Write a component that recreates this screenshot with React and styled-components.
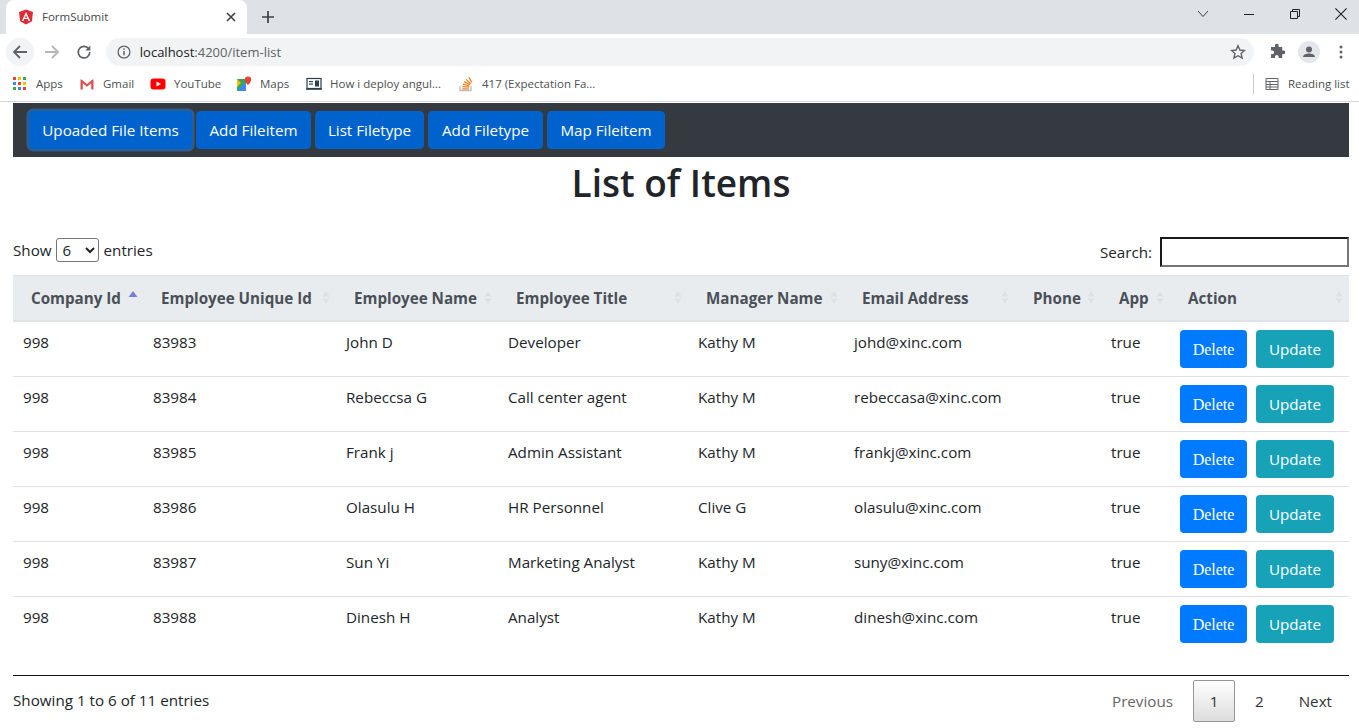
import React from 'react';
import styled, { createGlobalStyle } from 'styled-components';

const Global = createGlobalStyle`
  html, body { margin: 0; padding: 0; background: #fff; overflow: hidden; }
  body { font-family: "Open Sans", "Liberation Sans", sans-serif; color: #212529; }
`;

const Shell = styled.div`
  width: 1359px;
  height: 728px;
  overflow: hidden;
`;

/* browser chrome */
const TabStrip = styled.div`
  height: 34px;
  background: #dee1e6;
  display: flex;
  align-items: stretch;
  padding-left: 6px;
`;
const Tab = styled.div`
  width: 241px;
  background: #fff;
  border-radius: 8px 8px 0 0;
  display: flex;
  align-items: center;
  padding: 0 11px 0 12px;
  box-sizing: border-box;
`;
const TabTitle = styled.span`
  flex: 1;
  margin-left: 8px;
  margin-bottom: 2px;
  font-size: 11.5px;
  color: #45474a;
`;
const NewTab = styled.div`
  width: 42px;
  display: flex;
  align-items: center;
  justify-content: center;
`;
const WindowButtons = styled.div`
  margin-left: auto;
  display: flex;
  align-items: flex-start;
  padding: 7px 11px 0 0;
  gap: 32px;
`;
const Toolbar = styled.div`
  height: 36px;
  display: flex;
  align-items: center;
  padding-left: 6px;
  background: #fff;
`;
const RoundBtn = styled.div`
  width: 28px;
  height: 28px;
  margin-right: 4px;
  border-radius: 50%;
  display: flex;
  align-items: center;
  justify-content: center;
  background: ${(p) => (p.$active ? '#f1f3f4' : 'transparent')};
`;
const Omnibox = styled.div`
  width: 1151px;
  height: 28px;
  margin-left: 4px;
  margin-right: 9px;
  padding: 0 8px 0 11px;
  box-sizing: border-box;
  border-radius: 14px;
  background: #f1f3f4;
  display: flex;
  align-items: center;
`;
const Url = styled.span`
  flex: 1;
  margin-left: 9px;
  font-size: 13px;
  color: #5f6368;
  b { font-weight: 400; color: #202124; }
`;
const ToolIcons = styled.div`
  display: flex;
  align-items: center;
`;
const Bookmarks = styled.div`
  height: 32px;
  box-sizing: border-box;
  border-bottom: 1px solid #d5d7db;
  display: flex;
  align-items: center;
  padding: 0 0 4px 12px;
`;
const Bookmark = styled.div`
  width: ${(p) => p.$w}px;
  display: flex;
  align-items: center;
  gap: 8px;
  font-size: 11.5px;
  color: #4d4f52;
  white-space: nowrap;
`;
const ReadingList = styled.div`
  margin-left: auto;
  height: 20px;
  border-left: 1px solid #c9ccd0;
  padding-left: 11px;
  width: 106px;
  box-sizing: border-box;
  display: flex;
  align-items: center;
  gap: 9px;
  font-size: 11.5px;
  color: #4d4f52;
  white-space: nowrap;
`;

/* page */
const Page = styled.div`
  margin: 1px 10px 0 13px;
`;
const Nav = styled.nav`
  height: 54px;
  background: #343a40;
  display: flex;
  align-items: center;
  padding-left: 16px;
  gap: 4px;
`;
const NavButton = styled.button`
  height: 38px;
  padding: 0;
  width: ${(p) => p.$w}px;
  border: 1px solid #0062cc;
  border-radius: 4px;
  background: #0062cc;
  color: #fff;
  font-family: inherit;
  font-size: 15.2px;
  box-shadow: ${(p) => (p.$focus ? '0 0 0 2.5px rgba(38,143,255,.42)' : 'none')};
`;
const Title = styled.h1`
  margin: 0;
  height: 79px;
  padding-top: 2px;
  box-sizing: border-box;
  text-align: center;
  font-size: 37px;
  line-height: 47px;
  font-weight: 600;
  color: #212529;
`;
const Controls = styled.div`
  height: 39px;
  display: flex;
  align-items: flex-start;
  justify-content: space-between;
  font-size: 15.2px;
`;
const Length = styled.label`
  display: flex;
  align-items: center;
  gap: 4px;
  height: 28px;
`;
const SizeSelect = styled.select`
  width: 43px;
  height: 24px;
  margin-right: 1px;
  font-family: inherit;
  font-size: 15px;
  padding: 0 0 0 2px;
  background: #fff;
  color: #212529;
  border: 1px solid #767676;
  border-radius: 3px;
`;
const SearchBox = styled.label`
  display: flex;
  align-items: center;
  gap: 8px;
  margin-top: 1px;
`;
const SearchInput = styled.input`
  width: 189px;
  height: 30px;
  box-sizing: border-box;
  border: 2px solid;
  border-color: #1a1a1a #767676 #767676 #1a1a1a;
  padding: 0 4px;
  outline: none;
`;
const Table = styled.table`
  width: 1336px;
  table-layout: fixed;
  border-collapse: collapse;
  font-size: 15.2px;
`;
const Head = styled.th`
  width: ${(p) => p.$w}px;
  height: 45px;
  padding: 0 5px 0 18px;
  box-sizing: border-box;
  background: #e9ecef;
  border-top: 1px solid #dee2e6;
  border-bottom: 2px solid #dee2e6;
  color: #495057;
  font-weight: 700;
  text-align: left;
`;
const HeadInner = styled.div`
  display: flex;
  align-items: center;
  justify-content: space-between;
  white-space: nowrap;
`;
const Row = styled.tr`
  height: 55px;
  border-bottom: 1px solid #dee2e6;
  &:first-child { height: 56px; }
  &:last-child { border-bottom: none; }
`;
const Cell = styled.td`
  padding: 8px 10px 0;
  vertical-align: top;
  line-height: 24px;
  color: #212529;
  white-space: nowrap;
`;
const Actions = styled.div`
  display: flex;
  gap: 9px;
`;
const ActionButton = styled.button`
  width: ${(p) => p.$w}px;
  height: 38px;
  padding: ${(p) => p.$pad};
  border: none;
  border-radius: 4px;
  color: #fff;
  background: ${(p) => p.$bg};
  font-family: ${(p) => p.$font};
  font-size: ${(p) => p.$size}px;
`;
const Footer = styled.div`
  margin-top: 23px;
  border-top: 1px solid #111;
  display: flex;
  align-items: flex-start;
  justify-content: space-between;
  font-size: 15.2px;
`;
const Info = styled.div`
  margin-top: 14px;
`;
const Pager = styled.div`
  display: flex;
  align-items: center;
  margin-top: 4px;
  margin-right: 17px;
`;
const PageLink = styled.span`
  color: ${(p) => (p.$off ? '#666' : '#333')};
  margin-left: ${(p) => p.$ml || 0}px;
`;
const CurrentPage = styled.span`
  width: 42px;
  height: 42px;
  box-sizing: border-box;
  margin-left: 20px;
  display: flex;
  align-items: center;
  justify-content: center;
  border: 1px solid #979797;
  border-radius: 2px;
  color: #333;
  background: linear-gradient(to bottom, #fff 0%, #dcdcdc 100%);
`;

const AngularIcon = () => (
  <svg width="16" height="16" viewBox="0 0 16 16">
    <path d="M8 0.5 1 3l1.1 9.2L8 15.5l5.9-3.3L15 3z" fill="#dd2c35" />
    <path d="M8 3 3.8 12h1.6l.8-2h3.6l.8 2h1.6zM8 6.2 9.2 8.7H6.8z" fill="#fff" />
  </svg>
);
const CloseIcon = ({ size = 10, color = '#3c4043', w = 1.6 }) => (
  <svg width={size} height={size} viewBox="0 0 10 10">
    <path d="M1 1l8 8M9 1l-8 8" stroke={color} strokeWidth={w} fill="none" />
  </svg>
);
const PlusIcon = () => (
  <svg width="12" height="12" viewBox="0 0 12 12">
    <path d="M6 0v12M0 6h12" stroke="#3c4043" strokeWidth="1.7" />
  </svg>
);
const ChevronIcon = () => (
  <svg width="14" height="14" viewBox="0 0 14 14">
    <path d="M2 4l5 5.5L12 4" stroke="#3c4043" strokeWidth="1" fill="none" />
  </svg>
);
const MinIcon = () => (
  <svg width="14" height="14" viewBox="0 0 14 14">
    <path d="M2 7.5h10" stroke="#222" strokeWidth="1" />
  </svg>
);
const RestoreIcon = () => (
  <svg width="14" height="14" viewBox="0 0 14 14">
    <path d="M2.5 4.5h7v7h-7zM4.5 4.5v-2h7v7h-2" stroke="#222" strokeWidth="1" fill="none" />
  </svg>
);
const BackIcon = ({ color }) => (
  <svg width="16" height="16" viewBox="0 0 16 16">
    <path d="M15 8H2M8 2 2 8l6 6" stroke={color} strokeWidth="1.8" fill="none" />
  </svg>
);
const ForwardIcon = ({ color }) => (
  <svg width="16" height="16" viewBox="0 0 16 16">
    <path d="M1 8h13M8 2l6 6-6 6" stroke={color} strokeWidth="1.8" fill="none" />
  </svg>
);
const ReloadIcon = () => (
  <svg width="16" height="16" viewBox="0 0 16 16">
    <path d="M13 5.2A5.8 5.8 0 1 0 13.8 8" stroke="#5f6368" strokeWidth="1.7" fill="none" />
    <path d="M14.3 1.5v5h-5z" fill="#5f6368" />
  </svg>
);
const InfoIcon = () => (
  <svg width="14" height="14" viewBox="0 0 14 14">
    <circle cx="7" cy="7" r="5.9" stroke="#5f6368" strokeWidth="1.3" fill="none" />
    <path d="M7 6v4.2" stroke="#5f6368" strokeWidth="1.5" />
    <circle cx="7" cy="4.1" r=".9" fill="#5f6368" />
  </svg>
);
const StarIcon = () => (
  <svg width="16" height="16" viewBox="0 0 16 16">
    <path d="M8 1.8l1.9 4.2 4.6.5-3.4 3.1 1 4.5L8 11.7l-4.1 2.4 1-4.5L1.5 6.5 6.1 6z" stroke="#5f6368" strokeWidth="1.4" fill="none" />
  </svg>
);
const PuzzleIcon = () => (
  <svg width="16" height="16" viewBox="0 0 16 16">
    <path d="M6 1.5a1.8 1.8 0 0 1 3.6 0V3h3.6v3.4h1.2a1.9 1.9 0 0 1 0 3.8h-1.2V14H9.6v-1.3a1.8 1.8 0 0 0-3.6 0V14H2v-3.8h1.2a1.9 1.9 0 0 0 0-3.8H2V3h4z" fill="#5f6368" />
  </svg>
);
const AvatarIcon = () => (
  <svg width="22" height="22" viewBox="0 0 22 22">
    <circle cx="11" cy="11" r="11" fill="#e4e6eb" />
    <circle cx="11" cy="8.5" r="3" fill="#5f6368" />
    <path d="M5 16c0-2.5 3.5-3.6 6-3.6s6 1.1 6 3.6z" fill="#5f6368" />
  </svg>
);
const DotsIcon = () => (
  <svg width="4" height="14" viewBox="0 0 4 14">
    <circle cx="2" cy="2" r="1.5" fill="#5f6368" />
    <circle cx="2" cy="7" r="1.5" fill="#5f6368" />
    <circle cx="2" cy="12" r="1.5" fill="#5f6368" />
  </svg>
);
const AppsIcon = () => {
  const colors = ['#ea4335', '#fbbc05', '#34a853', '#4285f4', '#ea4335', '#fbbc05', '#34a853', '#4285f4', '#ea4335'];
  return (
    <svg width="16" height="16" viewBox="0 0 16 16">
      {colors.map((c, i) => (
        <rect key={i} x={1 + (i % 3) * 5} y={1 + Math.floor(i / 3) * 5} width="3" height="3" fill={c} />
      ))}
    </svg>
  );
};
const GmailIcon = () => (
  <svg width="16" height="16" viewBox="0 0 16 16">
    <path d="M1.5 13.5v-10h1L8 8l5.5-4.5h1v10h-2.3V7.3L8 10.7 3.8 7.3v6.2z" fill="#d9534f" />
  </svg>
);
const YoutubeIcon = () => (
  <svg width="16" height="16" viewBox="0 0 16 16">
    <rect x="0.5" y="2.5" width="15" height="11" rx="3" fill="#f00" />
    <path d="M6.5 5.5v5L11 8z" fill="#fff" />
  </svg>
);
const MapsIcon = () => (
  <svg width="16" height="16" viewBox="0 0 16 16">
    <path d="M1 3h9v12H1z" fill="#34a853" />
    <path d="M1 15 10 6v9z" fill="#4285f4" />
    <path d="M1 3l4 4-4 4z" fill="#fbbc05" />
    <path d="M12 0.5A3.2 3.2 0 0 0 8.8 3.7C8.8 6 12 9 12 9s3.2-3 3.2-5.3A3.2 3.2 0 0 0 12 .5z" fill="#ea4335" />
  </svg>
);
const BoardIcon = () => (
  <svg width="16" height="16" viewBox="0 0 16 16">
    <rect x="1" y="2.5" width="14" height="10" fill="#fff" stroke="#2c3e50" strokeWidth="1.2" />
    <rect x="3" y="5" width="4" height="1.2" fill="#2c3e50" />
    <rect x="3" y="7.5" width="4" height="1.2" fill="#2c3e50" />
    <rect x="9" y="4.5" width="4" height="6" fill="#2c3e50" />
    <rect x="0" y="12.5" width="16" height="1.3" fill="#2c3e50" />
  </svg>
);
const StackIcon = () => (
  <svg width="16" height="16" viewBox="0 0 16 16">
    <path d="M2 10v4.5h11V10" stroke="#bcbbbb" strokeWidth="1.3" fill="none" />
    <path d="M4.2 12.8h6.6M4.4 10.6l6.5.6M5 8.2l6.3 1.7M6.2 5.7l5.7 3M8.2 3.4l4.6 4.3M10.8 1.2l3 5.2" stroke="#f48024" strokeWidth="1.3" fill="none" />
  </svg>
);
const ListIcon = () => (
  <svg width="14" height="14" viewBox="0 0 14 14">
    <path d="M1 1.5h12v11H1zM1 4.5h12M1 7.5h12M1 10h12M5 4.5v8" stroke="#5f6368" strokeWidth="1" fill="none" />
  </svg>
);
const SortIcon = ({ asc }) => (
  <svg width="10" height="15" viewBox="0 0 10 15">
    {asc ? (
      <path d="M5 1 9.5 7h-9z" fill="#7b7bdc" />
    ) : (
      <>
        <path d="M5 1 8.5 6.5h-7z" fill="#dde0e4" />
        <path d="M5 14 8.5 8.5h-7z" fill="#dde0e4" />
      </>
    )}
  </svg>
);

const bookmarks = [
  { label: 'Apps', icon: <AppsIcon />, w: 67 },
  { label: 'Gmail', icon: <GmailIcon />, w: 71 },
  { label: 'YouTube', icon: <YoutubeIcon />, w: 86 },
  { label: 'Maps', icon: <MapsIcon />, w: 70 },
  { label: 'How i deploy angul...', icon: <BoardIcon />, w: 152 },
  { label: '417 (Expectation Fa...', icon: <StackIcon />, w: 160 },
];

const navItems = [
  { label: 'Upoaded File Items', w: 163, focus: true },
  { label: 'Add Fileitem', w: 115 },
  { label: 'List Filetype', w: 109 },
  { label: 'Add Filetype', w: 115 },
  { label: 'Map Fileitem', w: 118 },
];

const columns = [
  { label: 'Company Id', w: 130, asc: true },
  { label: 'Employee Unique Id', w: 193 },
  { label: 'Employee Name', w: 162 },
  { label: 'Employee Title', w: 190 },
  { label: 'Manager Name', w: 156 },
  { label: 'Email Address', w: 171 },
  { label: 'Phone', w: 86 },
  { label: 'App', w: 69 },
  { label: 'Action', w: 179 },
];

const rows = [
  ['83983', 'John D', 'Developer', 'Kathy M', 'johd@xinc.com'],
  ['83984', 'Rebeccsa G', 'Call center agent', 'Kathy M', 'rebeccasa@xinc.com'],
  ['83985', 'Frank j', 'Admin Assistant', 'Kathy M', 'frankj@xinc.com'],
  ['83986', 'Olasulu H', 'HR Personnel', 'Clive G', 'olasulu@xinc.com'],
  ['83987', 'Sun Yi', 'Marketing Analyst', 'Kathy M', 'suny@xinc.com'],
  ['83988', 'Dinesh H', 'Analyst', 'Kathy M', 'dinesh@xinc.com'],
];

const App = () => (
  <Shell>
    <Global />
    <TabStrip>
      <Tab>
        <AngularIcon />
        <TabTitle>FormSubmit</TabTitle>
        <CloseIcon />
      </Tab>
      <NewTab>
        <PlusIcon />
      </NewTab>
      <WindowButtons>
        <ChevronIcon />
        <MinIcon />
        <RestoreIcon />
        <CloseIcon size={14} color="#222" w={0.8} />
      </WindowButtons>
    </TabStrip>
    <Toolbar>
      <RoundBtn $active>
        <BackIcon color="#5f6368" />
      </RoundBtn>
      <RoundBtn>
        <ForwardIcon color="#b4b6b9" />
      </RoundBtn>
      <RoundBtn>
        <ReloadIcon />
      </RoundBtn>
      <Omnibox>
        <InfoIcon />
        <Url>
          <b>localhost</b>:4200/item-list
        </Url>
        <StarIcon />
      </Omnibox>
      <ToolIcons>
        <RoundBtn>
          <PuzzleIcon />
        </RoundBtn>
        <RoundBtn>
          <AvatarIcon />
        </RoundBtn>
        <RoundBtn>
          <DotsIcon />
        </RoundBtn>
      </ToolIcons>
    </Toolbar>
    <Bookmarks>
      {bookmarks.map((b) => (
        <Bookmark key={b.label} $w={b.w}>
          {b.icon}
          {b.label}
        </Bookmark>
      ))}
      <ReadingList>
        <ListIcon />
        Reading list
      </ReadingList>
    </Bookmarks>
    <Page>
      <Nav>
        {navItems.map((n) => (
          <NavButton key={n.label} $w={n.w} $focus={n.focus}>
            {n.label}
          </NavButton>
        ))}
      </Nav>
      <Title>List of Items</Title>
      <Controls>
        <Length>
          Show
          <SizeSelect defaultValue="6">
            <option value="6">6</option>
            <option value="10">10</option>
          </SizeSelect>
          entries
        </Length>
        <SearchBox>
          Search:
          <SearchInput />
        </SearchBox>
      </Controls>
      <Table>
        <thead>
          <tr>
            {columns.map((c) => (
              <Head key={c.label} $w={c.w}>
                <HeadInner>
                  {c.label}
                  <SortIcon asc={c.asc} />
                </HeadInner>
              </Head>
            ))}
          </tr>
        </thead>
        <tbody>
          {rows.map((r) => (
            <Row key={r[0]}>
              <Cell>998</Cell>
              {r.map((v, i) => (
                <Cell key={i}>{v}</Cell>
              ))}
              <Cell />
              <Cell>true</Cell>
              <Cell>
                <Actions>
                  <ActionButton $w={67} $bg="#007bff" $font='"Liberation Serif", serif' $size={16} $pad="2px 0 0">
                    Delete
                  </ActionButton>
                  <ActionButton $w={78} $bg="#17a2b8" $font="inherit" $size={15.2} $pad="0">
                    Update
                  </ActionButton>
                </Actions>
              </Cell>
            </Row>
          ))}
        </tbody>
      </Table>
      <Footer>
        <Info>Showing 1 to 6 of 11 entries</Info>
        <Pager>
          <PageLink $off>Previous</PageLink>
          <CurrentPage>1</CurrentPage>
          <PageLink $ml={20}>2</PageLink>
          <PageLink $ml={35}>Next</PageLink>
        </Pager>
      </Footer>
    </Page>
  </Shell>
);

export default App;
